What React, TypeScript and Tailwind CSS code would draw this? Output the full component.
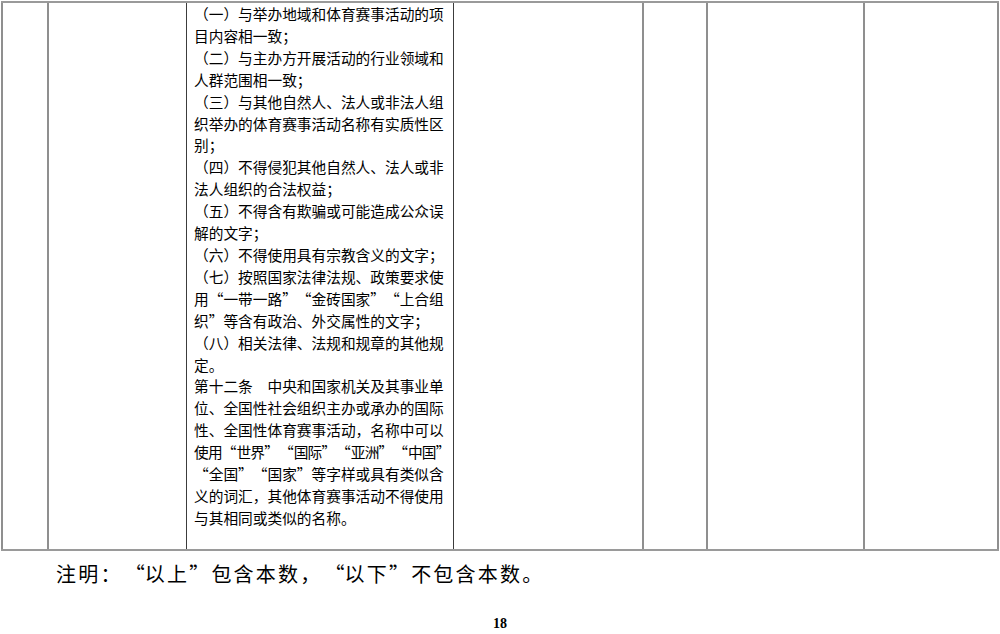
const lines = [
  '（一）与举办地域和体育赛事活动的项',
  '目内容相一致；',
  '（二）与主办方开展活动的行业领域和',
  '人群范围相一致；',
  '（三）与其他自然人、法人或非法人组',
  '织举办的体育赛事活动名称有实质性区',
  '别；',
  '（四）不得侵犯其他自然人、法人或非',
  '法人组织的合法权益；',
  '（五）不得含有欺骗或可能造成公众误',
  '解的文字；',
  '（六）不得使用具有宗教含义的文字；',
  '（七）按照国家法律法规、政策要求使',
  '用“一带一路”“金砖国家”“上合组',
  '织”等含有政治、外交属性的文字；',
  '（八）相关法律、法规和规章的其他规',
  '定。',
  '第十二条　中央和国家机关及其事业单',
  '位、全国性社会组织主办或承办的国际',
  '性、全国性体育赛事活动，名称中可以',
  '使用“世界”“国际”“亚洲”“中国”',
  '“全国”“国家”等字样或具有类似含',
  '义的词汇，其他体育赛事活动不得使用',
  '与其相同或类似的名称。',
]

// CJK-style full-width quotes: opening sits in the right half, closing in the left half
function Quoted({ text, wide }: { text: string; wide?: boolean }) {
  const w = wide ? 'w-[22.2px]' : 'w-[1em]'
  return (
    <>
      {text.split(/([“”])/).map((part, i) => {
        if (part === '“') return <span key={i} className={`inline-block ${w} text-right tracking-normal`}>“</span>
        if (part === '”') return <span key={i} className={`inline-block ${w} text-left tracking-normal`}>”</span>
        return <span key={i}>{part}</span>
      })}
    </>
  )
}

export default function App() {
  return (
    <div className="relative w-[1000px] h-[634px] overflow-hidden bg-white text-black font-['Noto_Sans_CJK_SC',sans-serif]">
      <div className="ml-[1px] mt-[1px] flex h-[550px] w-[998px] border-t-2 border-b-2 border-[#9a9a9a]">
        <div className="w-[46px] border-l-2 border-[#8f8f8f]" />
        <div className="w-[139px] border-l-2 border-[#8f8f8f]" />
        <div className="w-[267px] border-l border-[#3c3c3c] pl-[7px] text-[14.7px] leading-[21.9px]">
          {lines.map((l, i) => (
            <div key={i} className={i === 20 ? 'whitespace-nowrap tracking-[-0.8px]' : 'whitespace-nowrap'}>
              <Quoted text={l} />
            </div>
          ))}
        </div>
        <div className="w-[189px] border-l border-[#3c3c3c]" />
        <div className="w-[64px] border-l-2 border-[#8f8f8f]" />
        <div className="w-[157px] border-l-2 border-[#8f8f8f]" />
        <div className="w-[136px] border-l-2 border-r-2 border-[#8f8f8f]" />
      </div>
      <div className="mt-[11px] pl-[56px] text-[20px] leading-[24px] tracking-[2.2px] whitespace-nowrap">
        <Quoted text="注明：“以上”包含本数，“以下”不包含本数。" wide />
      </div>
      <div className="mt-[31px] text-center text-[14px] leading-[14px] font-['Liberation_Serif',serif] font-bold">18</div>
    </div>
  )
}
